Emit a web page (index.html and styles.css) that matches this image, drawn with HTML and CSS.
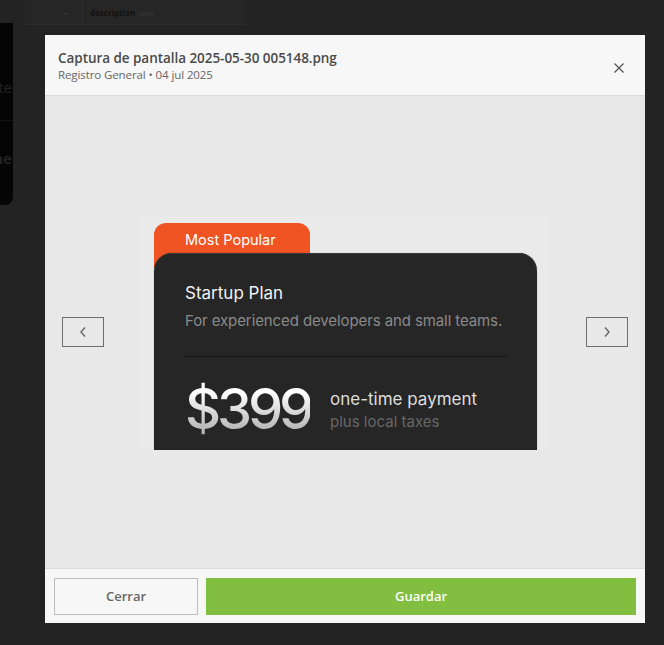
FILE: index.html
```html
<!DOCTYPE html>
<html lang="es">
<head>
<meta charset="utf-8">
<title>Captura de pantalla</title>
<link rel="stylesheet" href="styles.css">
</head>
<body>
<div class="page">
  <aside class="side-panel">
    <span class="side-text t1">l te</span>
    <span class="side-line"></span>
    <span class="side-text t2">ne</span>
  </aside>
  <div class="table">
    <div class="table-row">
      <span class="cell-chev">⌄</span>
      <span class="cell-name"><b>description</b> <span class="cell-type">text</span></span>
    </div>
  </div>
</div>

<div class="modal">
  <header class="modal-header">
    <div class="titles">
      <div class="title">Captura de pantalla 2025-05-30 005148.png</div>
      <div class="subtitle">Registro General • 04 jul 2025</div>
    </div>
    <button class="close" aria-label="Cerrar">
      <svg width="12" height="12" viewBox="0 0 12 12"><path d="M1.5 1.5 L10.5 10.5 M10.5 1.5 L1.5 10.5" stroke="#555" stroke-width="1.3" fill="none"/></svg>
    </button>
  </header>

  <main class="modal-body">
    <button class="nav" aria-label="Anterior">
      <svg width="8" height="12" viewBox="0 0 8 12"><path d="M6 1.5 L2 6 L6 10.5" stroke="#666" stroke-width="1.4" fill="none"/></svg>
    </button>

    <div class="shot">
      <div class="tab">Most Popular</div>
      <div class="card">
        <div class="plan">Startup Plan</div>
        <div class="plan-desc">For experienced developers and small teams.</div>
        <div class="divider"></div>
        <div class="price-row">
          <div class="price">$399</div>
          <div class="price-info">
            <div class="once">one-time payment</div>
            <div class="tax">plus local taxes</div>
          </div>
        </div>
      </div>
    </div>

    <button class="nav" aria-label="Siguiente">
      <svg width="8" height="12" viewBox="0 0 8 12"><path d="M2 1.5 L6 6 L2 10.5" stroke="#666" stroke-width="1.4" fill="none"/></svg>
    </button>
  </main>

  <footer class="modal-footer">
    <button class="btn btn-close">Cerrar</button>
    <button class="btn btn-save">Guardar</button>
  </footer>
</div>
</body>
</html>
```

FILE: styles.css
```css
* { box-sizing: border-box; }

html, body {
  margin: 0;
  height: 100%;
}

body {
  background: #232323;
  font-family: "Open Sans", "Noto Sans", sans-serif;
  overflow: hidden;
}

/* dimmed page behind the modal */
.page {
  display: flex;
  align-items: flex-start;
  gap: 12px;
}

.side-panel {
  width: 13px;
  height: 182px;
  margin-top: 23px;
  background: #050505;
  border-bottom-right-radius: 8px;
  position: relative;
  overflow: hidden;
}

.side-text {
  position: absolute;
  right: 1px;
  color: #222;
  font-size: 15px;
  line-height: 18px;
  white-space: nowrap;
}
.side-text.t1 { top: 55px; }
.side-text.t2 { top: 126px; font-weight: 700; }
.side-line {
  position: absolute;
  left: 0; right: 0;
  top: 97px;
  height: 1px;
  background: #121212;
}

.table {
  width: 220px;
  background: #262626;
}

.table-row {
  height: 25px;
  display: flex;
  align-items: center;
  border-bottom: 1px solid #2c2c2c;
}

.cell-chev {
  width: 58px;
  text-align: right;
  padding-right: 12px;
  color: #3a3a3a;
  font-size: 11px;
  border-right: 1px solid #2c2c2c;
  height: 100%;
  line-height: 22px;
}

.cell-name {
  padding-left: 7px;
  font-size: 8px;
  color: #111;
}
.cell-type { color: #3a3a3a; margin-left: 2px; }

/* modal */
.modal {
  position: fixed;
  left: 45px;
  top: 35px;
  width: 600px;
  height: 588px;
  display: flex;
  flex-direction: column;
  background: #e8e8e8;
}

.modal-header {
  height: 61px;
  flex: none;
  display: flex;
  align-items: center;
  justify-content: space-between;
  padding: 0 18px 0 13px;
  background: #f7f7f7;
  border-bottom: 1px solid #dcdcdc;
}

.titles { margin-top: 2px; }

.title {
  font-size: 13.5px;
  font-weight: 600;
  color: #4a4a4a;
  line-height: 18px;
  letter-spacing: -0.05px;
}

.subtitle {
  font-size: 11.5px;
  color: #666;
  line-height: 16px;
  margin-top: 0;
  letter-spacing: -0.1px;
}

.close {
  width: 16px;
  height: 16px;
  border: 0;
  padding: 0;
  background: transparent;
  display: flex;
  align-items: center;
  justify-content: center;
  margin-top: 6px;
}

.modal-body {
  flex: 1;
  display: flex;
  align-items: center;
  justify-content: space-between;
  padding: 0 17px;
}

.nav {
  width: 42px;
  height: 30px;
  border: 1px solid #6e6e6e;
  background: transparent;
  padding: 0;
  display: flex;
  align-items: center;
  justify-content: center;
}

/* screenshot image content */
.shot {
  width: 410px;
  height: 235px;
  background: #eaeaea;
  overflow: hidden;
  padding: 8px 13px 0 14px;
  font-family: "Inter", "Noto Sans", sans-serif;
}

.tab {
  width: 156px;
  height: 44px;
  background: #f05423;
  border-radius: 12px 12px 0 0;
  color: #fff;
  font-size: 14.5px;
  font-weight: 400;
  padding: 8px 0 0 31px;
  line-height: 18px;
}

.card {
  margin-top: -14px;
  height: 220px;
  background: #262626;
  border-radius: 18px 18px 0 0;
  box-shadow: inset 0 1px 0 #3a3a3a, 0 0 0 1px rgba(0,0,0,0.05);
  padding: 29px 30px 0 31px;
}

.plan {
  font-size: 17px;
  line-height: 22px;
  color: #f2f2f2;
}

.plan-desc {
  margin-top: 7px;
  font-size: 15px;
  line-height: 20px;
  letter-spacing: -0.1px;
  color: #8a8a8a;
}

.divider {
  margin-top: 25px;
  height: 1px;
  background: #141414;
}

.price-row {
  margin-top: 24px;
  display: flex;
  align-items: center;
  gap: 20px;
}

.price {
  font-size: 56px;
  line-height: 56px;
  font-weight: 500;
  letter-spacing: -4.2px;
  background: linear-gradient(180deg, #ffffff 20%, #a8a8a8 100%);
  -webkit-background-clip: text;
  background-clip: text;
  color: transparent;
}

.price-info {
  margin-top: 2px;
}

.once {
  font-size: 17px;
  line-height: 23px;
  color: #dedede;
}

.tax {
  font-size: 15px;
  line-height: 21px;
  color: #666;
}

/* footer */
.modal-footer {
  height: 55px;
  flex: none;
  display: flex;
  align-items: center;
  gap: 8px;
  padding: 0 9px;
  background: #f7f7f7;
  border-top: 1px solid #dcdcdc;
}

.btn {
  height: 37px;
  font-family: "Open Sans", "Noto Sans", sans-serif;
  font-size: 13px;
  font-weight: 600;
  cursor: pointer;
}

.btn-close {
  width: 144px;
  background: #f7f7f7;
  border: 1px solid #bcbcbc;
  color: #666;
}

.btn-save {
  flex: 1;
  background: #82bf41;
  border: 0;
  color: #fff;
}
```
